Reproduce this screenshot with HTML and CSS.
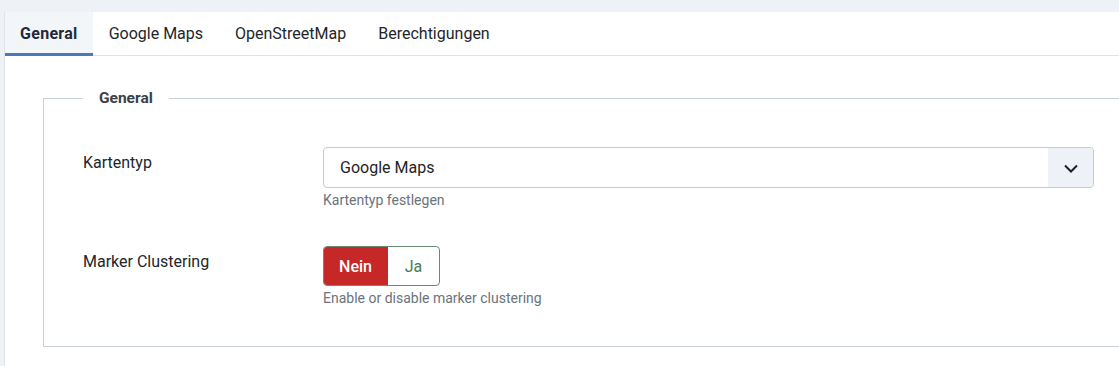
FILE: index.html
```html
<!DOCTYPE html>
<html lang="de">
<head>
<meta charset="utf-8">
<title>Karten</title>
<link rel="stylesheet" href="styles.css">
</head>
<body>
<div class="card">
  <nav class="tabs">
    <div class="tab active">General</div>
    <div class="tab">Google Maps</div>
    <div class="tab">OpenStreetMap</div>
    <div class="tab">Berechtigungen</div>
  </nav>
  <div class="panel">
    <fieldset class="group">
      <legend>General</legend>
      <div class="row">
        <div class="label">Kartentyp</div>
        <div class="control">
          <div class="select">
            <span class="value">Google Maps</span>
            <span class="arrow">
              <svg width="16" height="16" viewBox="0 0 16 16"><path d="M2 5.5 L8 11.5 L14 5.5" fill="none" stroke="#1b1f24" stroke-width="2"/></svg>
            </span>
          </div>
          <div class="help">Kartentyp festlegen</div>
        </div>
      </div>
      <div class="row">
        <div class="label">Marker Clustering</div>
        <div class="control">
          <div class="switch">
            <span class="opt no">Nein</span>
            <span class="opt yes">Ja</span>
          </div>
          <div class="help">Enable or disable marker clustering</div>
        </div>
      </div>
    </fieldset>
  </div>
</div>
</body>
</html>
```
FILE: styles.css
```css
html, body {
  margin: 0;
  padding: 0;
  overflow: hidden;
}
body {
  background: #eef2f7;
  font-family: Roboto, "Liberation Sans", sans-serif;
  color: #22262a;
  width: 1119px;
  height: 366px;
}
.card {
  margin: 12px 0 0 4px;
  background: #fff;
  border-left: 1px solid #dfe3e7;
  height: 354px;
}
.tabs {
  display: flex;
  height: 43px;
  border-bottom: 1px solid #dfe3e7;
}
.tab {
  display: flex;
  align-items: center;
  padding: 1px 16px 0;
  font-size: 16px;
  color: #22262a;
  border-bottom: 3px solid transparent;
  margin-bottom: -1px;
}
.tab.active {
  background: #f3f6f9;
  border-bottom-color: #4a79b6;
  font-weight: 700;
  color: #1f2a3a;
  padding: 1px 15px 0;
  letter-spacing: 0.3px;
}
.panel {
  padding: 33px 0 0 38px;
}
.group {
  margin: 0 -40px 0 0;
  border: 1px solid #c8d0d8;
  padding: 40px 0 38px 39px;
  min-width: 0;
}
.group legend {
  padding: 0 16px;
  font-size: 15.5px;
  font-weight: 700;
  line-height: 18px;
  color: #3a4049;
}
.row {
  display: grid;
  grid-template-columns: 240px 771px;
}
.row + .row {
  margin-top: 36px;
}
.label {
  font-size: 16px;
  line-height: 20px;
  padding-top: 6px;
  color: #22262a;
}
.select {
  display: flex;
  height: 41px;
  box-sizing: border-box;
  border: 1px solid #c3cbd3;
  border-radius: 4px;
  overflow: hidden;
}
.select .value {
  flex: 1;
  display: flex;
  align-items: center;
  padding-left: 16px;
  font-size: 16px;
  color: #1f2328;
}
.select .arrow {
  width: 45px;
  background: #eef2f8;
  display: flex;
  align-items: center;
  justify-content: center;
}
.help {
  font-size: 14px;
  line-height: 20px;
  color: #6b737c;
  margin-top: 2px;
}
.switch {
  display: inline-flex;
  height: 40px;
  box-sizing: border-box;
  border: 1px solid #6b8a72;
  border-radius: 4px;
  overflow: hidden;
  width: 117px;
}
.opt {
  display: flex;
  align-items: center;
  justify-content: center;
  font-size: 16px;
}
.opt.no {
  width: 65px;
  background: #c52827;
  color: #fff;
  font-weight: 500;
  margin: -1px 0 -1px -1px;
}
.opt.yes {
  flex: 1;
  color: #457d54;
}
.switch + .help {
  margin-top: 2px;
}
```
